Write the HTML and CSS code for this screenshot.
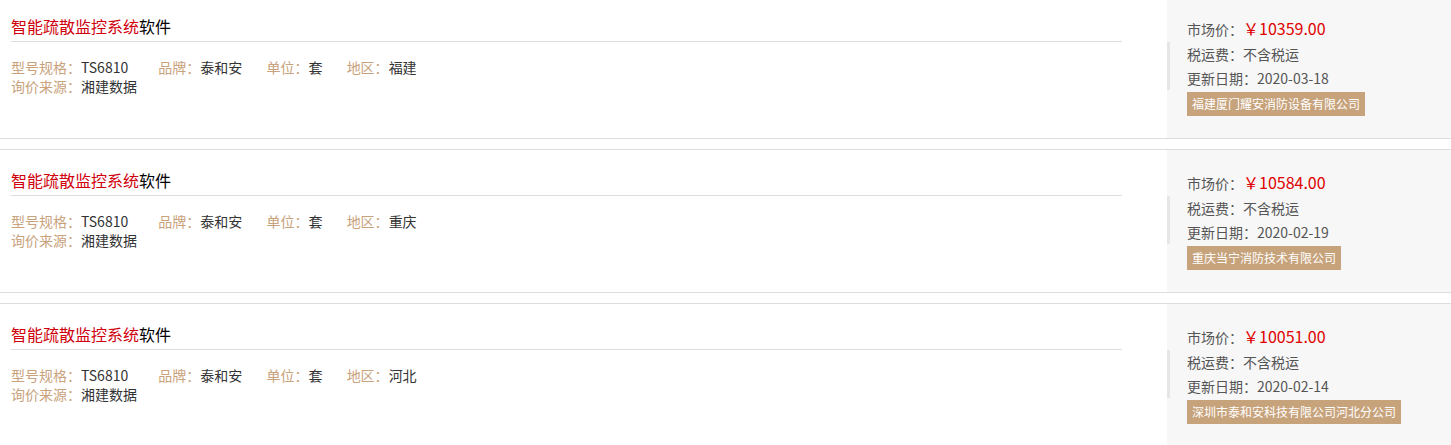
FILE: index.html
```html
<!DOCTYPE html>
<html lang="zh-CN">
<head>
    <meta charset="UTF-8">
    <meta name="viewport" content="width=device-width, initial-scale=1.0">
    <title>询价结果</title>
    <link rel="stylesheet" href="styles.css">
</head>
<body>
    <div class="price-list">

        <div class="item">
            <div class="item-main">
                <h3 class="item-title"><span class="hl">智能疏散监控系统</span>软件</h3>
                <div class="specs">
                    <span class="field model"><em>型号规格：</em>TS6810</span>
                    <span class="field"><em>品牌：</em>泰和安</span>
                    <span class="field"><em>单位：</em>套</span>
                    <span class="field"><em>地区：</em>福建</span>
                    <br>
                    <span class="field"><em>询价来源：</em>湘建数据</span>
                </div>
            </div>
            <div class="item-side">
                <p class="price-line">市场价：<span class="price">￥10359.00</span></p>
                <div class="meta">
                    <p>税运费：不含税运</p>
                    <p>更新日期：2020-03-18</p>
                </div>
                <span class="supplier">福建厦门耀安消防设备有限公司</span>
            </div>
        </div>

        <div class="item">
            <div class="item-main">
                <h3 class="item-title"><span class="hl">智能疏散监控系统</span>软件</h3>
                <div class="specs">
                    <span class="field model"><em>型号规格：</em>TS6810</span>
                    <span class="field"><em>品牌：</em>泰和安</span>
                    <span class="field"><em>单位：</em>套</span>
                    <span class="field"><em>地区：</em>重庆</span>
                    <br>
                    <span class="field"><em>询价来源：</em>湘建数据</span>
                </div>
            </div>
            <div class="item-side">
                <p class="price-line">市场价：<span class="price">￥10584.00</span></p>
                <div class="meta">
                    <p>税运费：不含税运</p>
                    <p>更新日期：2020-02-19</p>
                </div>
                <span class="supplier">重庆当宁消防技术有限公司</span>
            </div>
        </div>

        <div class="item">
            <div class="item-main">
                <h3 class="item-title"><span class="hl">智能疏散监控系统</span>软件</h3>
                <div class="specs">
                    <span class="field model"><em>型号规格：</em>TS6810</span>
                    <span class="field"><em>品牌：</em>泰和安</span>
                    <span class="field"><em>单位：</em>套</span>
                    <span class="field"><em>地区：</em>河北</span>
                    <br>
                    <span class="field"><em>询价来源：</em>湘建数据</span>
                </div>
            </div>
            <div class="item-side">
                <p class="price-line">市场价：<span class="price">￥10051.00</span></p>
                <div class="meta">
                    <p>税运费：不含税运</p>
                    <p>更新日期：2020-02-14</p>
                </div>
                <span class="supplier">深圳市泰和安科技有限公司河北分公司</span>
            </div>
        </div>

    </div>
</body>
</html>
```

FILE: styles.css
```css
body {
    margin: 0;
    font-family: "Noto Sans CJK SC", "Liberation Sans", sans-serif;
    font-size: 14px;
    color: #333;
    background: #fff;
    overflow: hidden;
}
p, h3 {
    margin: 0;
}
.price-list {
    margin-top: -5px;
}
.item {
    display: grid;
    grid-template-columns: 1fr 284px;
    height: 142px;
    border-top: 1px solid #ddd;
    border-bottom: 1px solid #ddd;
    margin-bottom: 10px;
}
.item-main {
    padding: 18px 45px 0 11px;
}
.item-title {
    font-size: 16px;
    font-weight: normal;
    line-height: 24px;
    color: #000;
    padding-bottom: 3px;
    border-bottom: 1px solid #ddd;
}
.item-title .hl {
    color: #d0000c;
}
.specs {
    margin-top: 16px;
    line-height: 19px;
    color: #333;
}
.specs .field {
    margin-right: 21px;
}
.specs .model {
    margin-right: 27px;
}
.specs em {
    font-style: normal;
    color: #c9a27c;
}
.item-side {
    background: #f7f7f7;
    padding: 20px 0 0 20px;
    line-height: 24px;
    color: #555;
}
.price-line {
    line-height: 25px;
}
.price {
    font-size: 16px;
    color: #e00000;
}
.meta {
    margin-left: -20px;
    padding-left: 17px;
    border-left: 3px solid #e6e6e6;
}
.supplier {
    display: inline-block;
    margin-top: 2px;
    padding: 0 5px;
    font-size: 12px;
    line-height: 24px;
    color: #fff;
    background: #c7a37c;
}
```
